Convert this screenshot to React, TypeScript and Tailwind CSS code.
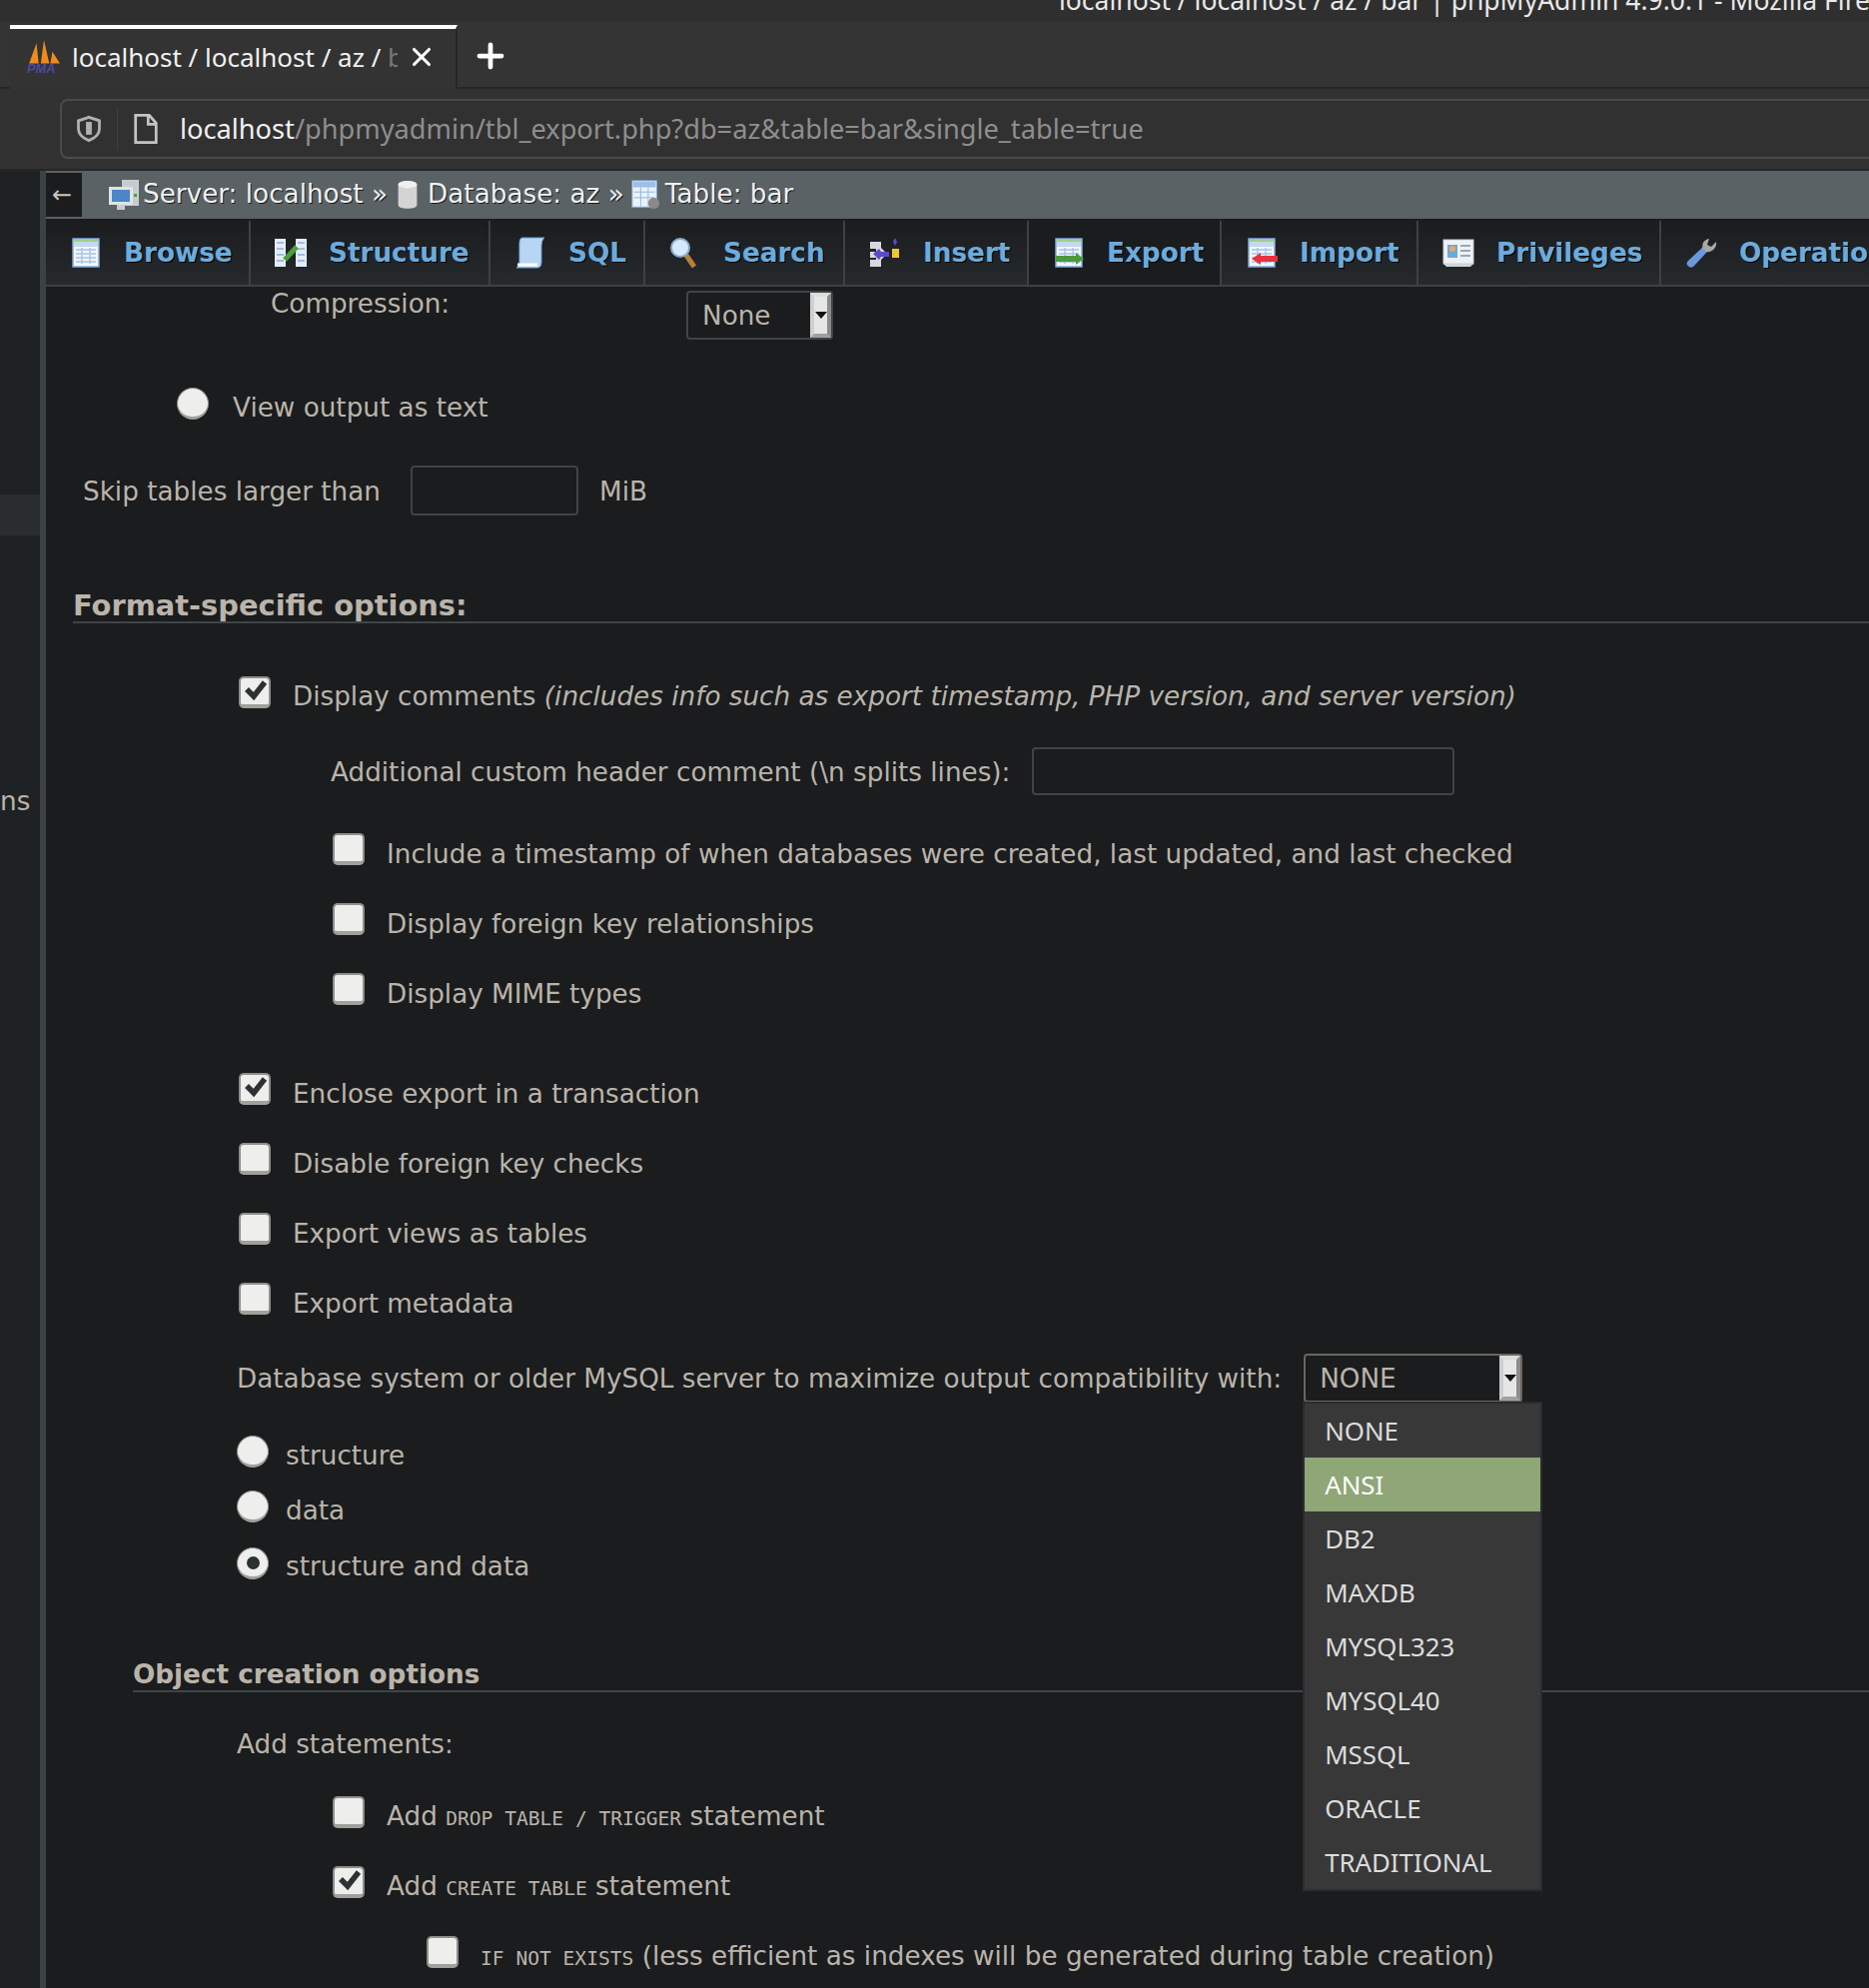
import React from 'react';
import { Plus, X } from 'lucide-react';

const tabs = [
  { label: 'Browse', width: 'w-[205px]', icon: 'browse' },
  { label: 'Structure', width: 'w-[240px]', icon: 'structure' },
  { label: 'SQL', width: 'w-[155px]', icon: 'sql' },
  { label: 'Search', width: 'w-[200px]', icon: 'search' },
  { label: 'Insert', width: 'w-[184px]', icon: 'insert' },
  { label: 'Export', width: 'w-[193px]', icon: 'export' },
  { label: 'Import', width: 'w-[197px]', icon: 'import' },
  { label: 'Privileges', width: 'w-[243px]', icon: 'privileges' },
  { label: 'Operations', width: 'w-[260px]', icon: 'operations' },
];

const dialects = ['NONE', 'ANSI', 'DB2', 'MAXDB', 'MYSQL323', 'MYSQL40', 'MSSQL', 'ORACLE', 'TRADITIONAL'];

const TableSheet = ({ children }: { children?: React.ReactNode }) => (
  <svg viewBox="0 0 32 32" className="w-8 h-8 shrink-0">
    <rect x="3" y="2" width="26" height="28" fill="#f2f6fb" stroke="#7fa8d8" strokeWidth="1.5" />
    <rect x="4" y="3" width="24" height="2" fill="#9fd08c" />
    <rect x="4" y="5" width="24" height="5" fill="#c4d8ee" />
    <path d="M6 13h20M6 17h20M6 21h20M6 25h20M12 11v16M20 11v16" stroke="#a9c4e4" strokeWidth="1.4" />
    {children}
  </svg>
);

const TabIcon = ({ name }: { name: string }) => {
  if (name === 'browse') return <TableSheet />;
  if (name === 'export')
    return (
      <TableSheet>
        <path d="M3 19h20v-3l8 6-8 6v-3H3z" fill="#4c9a3c" />
      </TableSheet>
    );
  if (name === 'import')
    return (
      <TableSheet>
        <path d="M32 19H15v-3l-9 6 9 6v-3h17z" fill="#e8323c" />
      </TableSheet>
    );
  if (name === 'structure')
    return (
      <svg viewBox="0 0 32 32" className="w-8 h-8 shrink-0">
        <rect x="0" y="2" width="11" height="28" fill="#e4edf7" />
        <rect x="21" y="2" width="11" height="28" fill="#e4edf7" />
        <path d="M2 6h7M2 12h7M2 18h7M2 24h7M23 6h7M23 12h7M23 18h7M23 24h7" stroke="#88aede" strokeWidth="1.5" />
        <path d="M10 23 22 10" fill="none" stroke="#4aa03c" strokeWidth="5" />
      </svg>
    );
  if (name === 'sql')
    return (
      <svg viewBox="0 0 32 32" className="w-8 h-8 shrink-0">
        <path d="M8 1h22c-3 3-3 6-3 12v12c0 3-1 6-4 6H2c3-2 3-4 3-8V7c0-4 1-6 3-6z" fill="#b8d6f4" stroke="#6e9fd6" />
        <path d="M3 28h20" stroke="#fff" strokeWidth="3" />
      </svg>
    );
  if (name === 'search')
    return (
      <svg viewBox="0 0 32 32" className="w-8 h-8 shrink-0">
        <path d="M16 17 25 30" stroke="#b8803c" strokeWidth="5" />
        <circle cx="11" cy="11" r="9" fill="#d6e8fb" stroke="#8aa8c8" strokeWidth="2" />
      </svg>
    );
  if (name === 'insert')
    return (
      <svg viewBox="0 0 32 32" className="w-8 h-8 shrink-0">
        <path d="M1 5h11v6l6 6-6 6v7H1v-7h6v-2H1v-6h6v-3H1z" fill="#d8d8e0" />
        <path d="M4 17l6-5 2 3h8v5h-8l-2 3z" fill="#5a4cc8" />
        <path d="M26 1l2 4-2 4-2-4z" fill="#5a4cc8" />
        <rect x="23" y="12" width="7" height="9" fill="#f2c832" />
      </svg>
    );
  if (name === 'privileges')
    return (
      <svg viewBox="0 0 32 32" className="w-8 h-8 shrink-0">
        <rect x="1" y="3" width="30" height="24" fill="#eef2f6" stroke="#c8d0d8" />
        <rect x="5" y="8" width="10" height="13" fill="#6aa8e0" />
        <circle cx="10" cy="12" r="3" fill="#e8a860" />
        <path d="M18 9h10M18 14h10M18 19h10" stroke="#9aa8b8" strokeWidth="2" />
        <path d="M1 27l3 3h24l3-3" fill="#cfd6dc" />
      </svg>
    );
  return (
    <svg viewBox="0 0 32 32" className="w-8 h-8 shrink-0">
      <path d="M4 30c-3-2-3-4-1-6l15-14 4 5L9 29c-2 2-3 2-5 1z" fill="#6a98dc" />
      <path d="M18 13c-2-5 0-10 6-11l-2 6 4 2 5-5c1 6-4 11-10 10z" fill="#a8a8a8" />
    </svg>
  );
};

const Checkbox = ({ checked = false }: { checked?: boolean }) => (
  <div className="w-[32px] h-[32px] mb-[8px] shrink-0 rounded-[5px] bg-[#eeeeec] border-2 border-[#8e8e8a] border-b-[4px] border-b-[#a0a09c] overflow-hidden">
    {checked && (
      <svg viewBox="0 0 28 26" className="w-[28px] h-[26px]">
        <path d="M6 11l7 7L24 4" fill="none" stroke="#2c3134" strokeWidth="5.5" />
      </svg>
    )}
  </div>
);

const Radio = ({ checked = false }: { checked?: boolean }) => (
  <div className="w-[32px] h-[32px] mb-[6px] shrink-0 rounded-full bg-[#eeeeec] border border-[#8e8e8a] border-b-[3px] border-b-[#a0a09c] flex items-center justify-center">
    {checked && <div className="w-[13px] h-[13px] rounded-full bg-[#2c3134]" />}
  </div>
);

const SelectArrow = () => (
  <div className="w-[21px] h-full bg-[#e6e6e6] border-[4px] border-t-[#dcdcdc] border-l-[#cfcfcf] border-r-[#8c8c8c] border-b-[#a0a0a0] flex items-center justify-center shrink-0">
    <div className="w-0 h-0 border-l-[6px] border-r-[6px] border-t-[7px] border-l-transparent border-r-transparent border-t-[#111]" />
  </div>
);

const Code = ({ children }: { children: React.ReactNode }) => (
  <span className="font-['DejaVu_Sans_Mono',monospace] text-[19.6px]">{children}</span>
);

export default function App() {
  return (
    <div className="w-[1871px] h-[1990px] overflow-hidden bg-[#1a1c1e] flex flex-col font-['DejaVu_Sans',sans-serif] text-[26.25px] text-[#bab4aa]">
      {/* Firefox chrome */}
      <div className="h-[22px] bg-[#2f2f2f] flex justify-end shrink-0 overflow-hidden">
        <div className="w-[811px] -mt-[18px] whitespace-nowrap font-['Noto_Sans',sans-serif] text-[26.5px] leading-[36px] text-[#e8e8e8]">
          localhost / localhost / az / bar | phpMyAdmin 4.9.0.1 - Mozilla Firefox
        </div>
      </div>
      <div className="h-[67px] bg-[#343434] border-b-2 border-[#262626] flex shrink-0 pl-[10px]">
        <div className="w-[448px] h-[65px] mt-[3px] bg-[#333] border-t-[4px] border-white border-r-2 border-r-[#262626] flex items-center pl-[17px] pb-[5px] font-['Noto_Sans',sans-serif] text-[#f0f0f0]">
          <svg viewBox="0 0 32 32" className="w-[34px] h-[34px] shrink-0">
            <path d="M2 22 9 3l2 19zM13 22l3-22 5 22zM22 22l2-11 7 11z" fill="#f08a1c" />
            <text x="0" y="31" fontSize="12" fontStyle="italic" fontWeight="bold" fill="#4a4aa0" fontFamily="Liberation Sans">PMA</text>
          </svg>
          <div className="ml-[11px] w-[326px] overflow-hidden whitespace-nowrap text-[26px]">localhost / localhost / az / <span className="text-[#777]">b</span></div>
          <X size={30} strokeWidth={2.5} className="ml-[9px] text-white" />
        </div>
        <Plus size={38} strokeWidth={3} className="ml-[14px] mt-[15px] text-white" />
      </div>
      <div className="h-[82px] bg-[#323232] border-b-[2px] border-[#262626] pt-[10px] pl-[60px] shrink-0">
        <div className="h-[60px] w-[1840px] border-2 border-[#4a4a4a] rounded-[8px] flex items-center bg-[#313131]">
          <svg viewBox="0 0 24 24" className="w-[28px] h-[30px] ml-[13px] shrink-0" fill="none" stroke="#b0b0b0" strokeWidth="2.4">
            <path d="M12 2 3 5v7c0 5 4 8 9 10 5-2 9-5 9-10V5z" />
            <path d="M12 6v11" strokeWidth="5" />
          </svg>
          <div className="w-px h-[42px] bg-[#3f3f3f] ml-[14px]" />
          <svg viewBox="0 0 24 28" className="w-[28px] h-[32px] ml-[14px] shrink-0" fill="none" stroke="#c4c4c4" strokeWidth="2.4">
            <path d="M3 2h12l6 7v17H3zM14 2v8h7" />
          </svg>
          <div className="ml-[20px] whitespace-nowrap font-['Noto_Sans',sans-serif] text-[27.2px] text-[#8e8e8e]">
            <span className="text-[#f0f0f0]">localhost</span>/phpmyadmin/tbl_export.php?db=az&amp;table=bar&amp;single_table=true
          </div>
        </div>
      </div>

      <div className="flex flex-1 min-h-0">
        {/* navigation panel sliver */}
        <div className="w-[46px] shrink-0 bg-[#1f2224] border-r-[6px] border-[#3c4144] flex flex-col">
          <div className="h-[324px]" />
          <div className="h-[41px] bg-[#2a2d30]" />
          <div className="mt-[247px] text-[#bab4aa]">ns</div>
        </div>

        <div className="flex-1 min-w-0 flex flex-col">
          {/* breadcrumb */}
          <div className="h-[48px] bg-[#5a6265] flex items-center shrink-0 text-[#f0f0f0] whitespace-nowrap [text-shadow:1px_1px_0_#1a1c1e]">
            <div className="w-[36px] h-[44px] bg-[#1a1c1e] flex items-center justify-center pr-[4px] text-[#c8c4bc] text-[24px]">←</div>
            <svg viewBox="0 0 32 32" className="w-[32px] h-[32px] ml-[26px] shrink-0">
              <rect x="14" y="1" width="17" height="26" fill="#c8ccd0" />
              <rect x="26" y="15" width="3" height="3" fill="#4aa03c" />
              <rect x="1" y="8" width="24" height="18" fill="#dfe3e6" />
              <rect x="4" y="11" width="18" height="12" fill="#4a86c8" />
              <rect x="9" y="26" width="8" height="5" fill="#c8ccd0" />
            </svg>
            <span className="ml-[3px]">Server: localhost »</span>
            <svg viewBox="0 0 24 32" className="w-[24px] h-[30px] ml-[8px] shrink-0">
              <path d="M2 5c0-5 20-5 20 0v22c0 5-20 5-20 0z" fill="#d4d4d4" />
              <ellipse cx="12" cy="5" rx="10" ry="4" fill="#f0f0f0" />
            </svg>
            <span className="ml-[8px]">Database: az »</span>
            <svg viewBox="0 0 32 32" className="w-[30px] h-[34px] ml-[7px] shrink-0">
              <rect x="1" y="1" width="26" height="28" fill="#eaf2fb" stroke="#8fb4dc" />
              <rect x="2" y="2" width="24" height="6" fill="#9cc0e6" />
              <path d="M3 13h22M3 19h22M10 8v20M18 8v20" stroke="#8fb4dc" />
              <circle cx="24" cy="25" r="6" fill="#8a8a8a" />
            </svg>
            <span className="ml-[4px]">Table: bar</span>
          </div>
          {/* menu tabs */}
          <div className="h-[66px] mt-[2px] flex shrink-0 border-b-2 border-[#3c4144] whitespace-nowrap overflow-hidden">
            {tabs.map((tab) => (
              <div
                key={tab.label}
                className={`${tab.width} shrink-0 h-full flex items-center pl-[24px] border-r-2 border-[#3c4144] font-bold text-[#6cabdc] [text-shadow:1px_1px_0_#000] ${tab.label === 'Export' ? 'bg-[#1a1c1e]' : 'bg-gradient-to-b from-[#1a1c1e] to-[#272a2d]'}`}
              >
                <TabIcon name={tab.icon} />
                <span className="ml-[22px] pt-[2px]">{tab.label}</span>
              </div>
            ))}
          </div>

          {/* export form */}
          <div className="flex flex-col whitespace-nowrap">
            <div className="h-[60px] flex items-start">
              <span className="ml-[225px] w-[416px] h-[32px] leading-[34px]">Compression:</span>
              <div className="mt-[4px] w-[147px] h-[49px] border-2 border-[#3f4447] rounded-[4px] flex justify-between pl-[14px] items-center">
                <span className="pt-[2px]">None</span>
                <SelectArrow />
              </div>
            </div>

            <div className="mt-[40px] h-[40px] flex items-center pl-[131px]">
              <Radio />
              <span className="ml-[24px] pt-[4px]">View output as text</span>
            </div>

            <div className="mt-[39px] h-[50px] flex items-center pl-[37px]">
              <span className="pt-[4px]">Skip tables larger than</span>
              <div className="ml-[30px] w-[168px] h-[50px] border-2 border-[#3f4447] rounded-[4px]" />
              <span className="ml-[21px] pt-[4px]">MiB</span>
            </div>

            <div className="mt-[69px] ml-[27px] h-[39px] border-b-2 border-[#3f4447] font-bold text-[28.9px] leading-[42px]">Format-specific options:</div>

            <div className="mt-[53px] h-[40px] flex items-center pl-[193px]">
              <Checkbox checked />
              <span className="ml-[22px] pt-[2px]">Display comments <em>(includes info such as export timestamp, PHP version, and server version)</em></span>
            </div>
            <div className="mt-[31px] h-[48px] flex items-center pl-[285px]">
              <span className="pt-[3px]">Additional custom header comment (\n splits lines):</span>
              <div className="ml-[22px] w-[423px] h-[48px] border-2 border-[#3f4447] rounded-[4px]" />
            </div>
            <div className="mt-[38px] h-[40px] flex items-center pl-[287px]">
              <Checkbox />
              <span className="ml-[22px] pt-[3px]">Include a timestamp of when databases were created, last updated, and last checked</span>
            </div>
            <div className="mt-[30px] h-[40px] flex items-center pl-[287px]">
              <Checkbox />
              <span className="ml-[22px] pt-[3px]">Display foreign key relationships</span>
            </div>
            <div className="mt-[30px] h-[40px] flex items-center pl-[287px]">
              <Checkbox />
              <span className="ml-[22px] pt-[3px]">Display MIME types</span>
            </div>

            <div className="mt-[60px] h-[40px] flex items-center pl-[193px]">
              <Checkbox checked />
              <span className="ml-[22px] pt-[3px]">Enclose export in a transaction</span>
            </div>
            <div className="mt-[30px] h-[40px] flex items-center pl-[193px]">
              <Checkbox />
              <span className="ml-[22px] pt-[3px]">Disable foreign key checks</span>
            </div>
            <div className="mt-[30px] h-[40px] flex items-center pl-[193px]">
              <Checkbox />
              <span className="ml-[22px] pt-[3px]">Export views as tables</span>
            </div>
            <div className="mt-[30px] h-[40px] flex items-center pl-[193px]">
              <Checkbox />
              <span className="ml-[22px] pt-[3px]">Export metadata</span>
            </div>

            <div className="mt-[31px] h-[49px] flex items-center pl-[191px]">
              <span className="pt-[3px]">Database system or older MySQL server to maximize output compatibility with:</span>
              <div className="relative ml-[22px] w-[219px] h-[49px] border-2 border-[#6a655c] rounded-[4px] flex justify-between items-center pl-[14px]">
                <span className="pt-[3px]">NONE</span>
                <SelectArrow />
                <div className="absolute left-[-3px] top-[46px] w-[240px] border-2 border-[#2a2c2e] bg-[#383838] font-['Noto_Sans',sans-serif] text-[25.8px] text-[#dcdcdc] z-10">
                  {dialects.map((d) => (
                    <div key={d} className={`h-[54px] flex items-center pl-[20px] ${d === 'ANSI' ? 'bg-[#8fa677] text-white' : ''}`}>{d}</div>
                  ))}
                </div>
              </div>
            </div>

            <div className="mt-[32px] h-[40px] flex items-center pl-[191px]">
              <Radio />
              <span className="ml-[17px] pt-[3px]">structure</span>
            </div>
            <div className="mt-[15px] h-[40px] flex items-center pl-[191px]">
              <Radio />
              <span className="ml-[17px] pt-[3px]">data</span>
            </div>
            <div className="mt-[17px] h-[40px] flex items-center pl-[191px]">
              <Radio checked />
              <span className="ml-[17px] pt-[2px]">structure and data</span>
            </div>

            <div className="mt-[68px] ml-[87px] h-[38px] border-b-2 border-[#3f4447] font-bold leading-[40px]">Object creation options</div>

            <div className="mt-[32px] h-[40px] flex items-center pl-[191px] pt-[2px]">Add statements:</div>
            <div className="mt-[32px] h-[40px] flex items-center pl-[287px]">
              <Checkbox />
              <span className="ml-[22px] pt-[2px]">Add <Code>DROP TABLE / TRIGGER</Code> statement</span>
            </div>
            <div className="mt-[30px] h-[40px] flex items-center pl-[287px]">
              <Checkbox checked />
              <span className="ml-[22px] pt-[2px]">Add <Code>CREATE TABLE</Code> statement</span>
            </div>
            <div className="mt-[30px] h-[40px] flex items-center pl-[381px]">
              <Checkbox />
              <span className="ml-[22px] pt-[2px]"><Code>IF NOT EXISTS</Code> (less efficient as indexes will be generated during table creation)</span>
            </div>
          </div>
        </div>
      </div>
    </div>
  );
}
